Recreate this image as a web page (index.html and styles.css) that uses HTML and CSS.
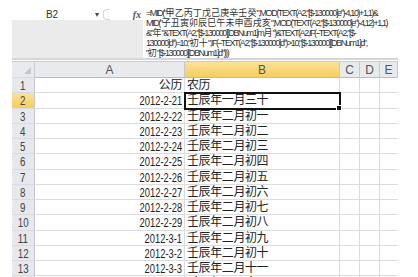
FILE: index.html
```html
<!DOCTYPE html>
<html>
<head>
  <title>农历转换</title>
  <link rel="stylesheet" href="styles.css">
</head>
<body>
  <div class="sheet">
    <div class="formula-bar">
      <div class="fb-left">
        <div class="name-row">
          <div class="name-box">B2</div>
          <span class="arrow">▾</span>
          <span class="grip"></span>
          <span class="fx">fx</span>
        </div>
      </div>
      <div class="formula">
        <div class="fl">=MID("<span class="zh">甲乙丙丁戊己庚辛壬癸</span>",MOD(TEXT(A2,"[$-130000]e")-4,10)+1,1)&amp;</div>
        <div class="fl">MID("<span class="zh">子丑寅卯辰巳午未申酉戌亥</span>",MOD(TEXT(A2,"[$-130000]e")-4,12)+1,1)</div>
        <div class="fl">&amp;"<span class="zh">年</span>"&amp;TEXT(A2,"[$-130000][DBNum1]m<span class="zh">月</span>")&amp;TEXT(A2,IF(--TEXT(A2,"[$-</div>
        <div class="fl">130000]d")=10,"<span class="zh">初十</span>",IF(--TEXT(A2,"[$-130000]d")&gt;10,"[$-130000][DBNum1]d",</div>
        <div class="fl">"<span class="zh">初</span>"[$-130000][DBNum1]d")))</div>
      </div>
    </div>

    <div class="grid">
      <div class="row head">
        <div class="rh corner"><span class="tri"></span></div>
        <div class="c ca">A</div>
        <div class="c cb sel-col">B</div>
        <div class="c cc">C</div>
        <div class="c cd">D</div>
        <div class="c ce">E</div>
      </div>
      <div class="row">
        <div class="rh"><span class="n">1</span></div>
        <div class="c ca num">公历</div>
        <div class="c cb">农历</div>
        <div class="c cc"></div><div class="c cd"></div><div class="c ce"></div>
      </div>
      <div class="row">
        <div class="rh sel-row"><span class="n">2</span></div>
        <div class="c ca num"><span class="n">2012-2-21</span></div>
        <div class="c cb active">壬辰年一月三十<span class="handle"></span></div>
        <div class="c cc"></div><div class="c cd"></div><div class="c ce"></div>
      </div>
      <div class="row">
        <div class="rh"><span class="n">3</span></div>
        <div class="c ca num"><span class="n">2012-2-22</span></div>
        <div class="c cb">壬辰年二月初一</div>
        <div class="c cc"></div><div class="c cd"></div><div class="c ce"></div>
      </div>
      <div class="row">
        <div class="rh"><span class="n">4</span></div>
        <div class="c ca num"><span class="n">2012-2-23</span></div>
        <div class="c cb">壬辰年二月初二</div>
        <div class="c cc"></div><div class="c cd"></div><div class="c ce"></div>
      </div>
      <div class="row">
        <div class="rh"><span class="n">5</span></div>
        <div class="c ca num"><span class="n">2012-2-24</span></div>
        <div class="c cb">壬辰年二月初三</div>
        <div class="c cc"></div><div class="c cd"></div><div class="c ce"></div>
      </div>
      <div class="row">
        <div class="rh"><span class="n">6</span></div>
        <div class="c ca num"><span class="n">2012-2-25</span></div>
        <div class="c cb">壬辰年二月初四</div>
        <div class="c cc"></div><div class="c cd"></div><div class="c ce"></div>
      </div>
      <div class="row">
        <div class="rh"><span class="n">7</span></div>
        <div class="c ca num"><span class="n">2012-2-26</span></div>
        <div class="c cb">壬辰年二月初五</div>
        <div class="c cc"></div><div class="c cd"></div><div class="c ce"></div>
      </div>
      <div class="row">
        <div class="rh"><span class="n">8</span></div>
        <div class="c ca num"><span class="n">2012-2-27</span></div>
        <div class="c cb">壬辰年二月初六</div>
        <div class="c cc"></div><div class="c cd"></div><div class="c ce"></div>
      </div>
      <div class="row">
        <div class="rh"><span class="n">9</span></div>
        <div class="c ca num"><span class="n">2012-2-28</span></div>
        <div class="c cb">壬辰年二月初七</div>
        <div class="c cc"></div><div class="c cd"></div><div class="c ce"></div>
      </div>
      <div class="row">
        <div class="rh"><span class="n">10</span></div>
        <div class="c ca num"><span class="n">2012-2-29</span></div>
        <div class="c cb">壬辰年二月初八</div>
        <div class="c cc"></div><div class="c cd"></div><div class="c ce"></div>
      </div>
      <div class="row">
        <div class="rh"><span class="n">11</span></div>
        <div class="c ca num"><span class="n">2012-3-1</span></div>
        <div class="c cb">壬辰年二月初九</div>
        <div class="c cc"></div><div class="c cd"></div><div class="c ce"></div>
      </div>
      <div class="row">
        <div class="rh"><span class="n">12</span></div>
        <div class="c ca num"><span class="n">2012-3-2</span></div>
        <div class="c cb">壬辰年二月初十</div>
        <div class="c cc"></div><div class="c cd"></div><div class="c ce"></div>
      </div>
      <div class="row">
        <div class="rh"><span class="n">13</span></div>
        <div class="c ca num"><span class="n">2012-3-3</span></div>
        <div class="c cb">壬辰年二月十一</div>
        <div class="c cc"></div><div class="c cd"></div><div class="c ce"></div>
      </div>
      <div class="row">
        <div class="rh"><span class="n">14</span></div>
        <div class="c ca num"><span class="n">2012-3-4</span></div>
        <div class="c cb">壬辰年二月十二</div>
        <div class="c cc"></div><div class="c cd"></div><div class="c ce"></div>
      </div>
    </div>
  </div>
</body>
</html>
```

FILE: styles.css
```css
html, body {
  height: 277px;
  overflow: hidden;
}

body {
  margin: 0;
  padding: 0;
  background: #fff;
  font-family: "Liberation Sans", "Noto Sans CJK SC", sans-serif;
}

.sheet {
  width: 386px;
  height: 269px;
  overflow: hidden;
  margin: 8px 0 0 12px;
}

/* formula bar */
.formula-bar {
  display: flex;
  height: 50px;
  border-bottom: 2px solid #d4d6d9;
}

.fb-left {
  width: 131px;
  background: #ebebeb;
}

.name-row {
  display: flex;
  align-items: center;
  height: 12px;
  background: #fff;
}

.name-box {
  width: 80px;
  text-align: center;
  font-size: 10px;
  color: #333;
}

.arrow {
  font-size: 8px;
  color: #444;
  margin-left: 3px;
}

.grip {
  width: 6px;
  height: 9px;
  margin-left: 4px;
  border: 1px solid #d8d8d8;
  border-right: none;
  border-radius: 4px 0 0 4px;
}

.fx {
  margin-left: auto;
  margin-right: 2px;
  font-family: "Liberation Serif", serif;
  font-style: italic;
  font-weight: bold;
  font-size: 10px;
  color: #555;
}

.formula {
  flex: 1;
  padding: 0 0 0 3px;
  font-size: 9px;
  line-height: 10px;
  letter-spacing: -1.4px;
  color: #333;
  overflow: hidden;
}

.fl {
  white-space: nowrap;
}

.zh {
  letter-spacing: 0.1px;
}

/* grid */
.grid {
  margin-top: 1px;
}

.row {
  display: flex;
  height: 15.25px;
  font-size: 12px;
  line-height: 15px;
  color: #222;
}

.row.head {
  height: 16px;
  line-height: 16px;
  background: #e8eaee;
  border-top: 1px solid #c9ccd1;
  color: #555;
  font-size: 12px;
}

.rh {
  width: 23px;
  flex: none;
  box-sizing: border-box;
  background: #e6e8ec;
  border-right: 1px solid #c5c9ce;
  border-bottom: 1px solid #d8dbe0;
  text-align: center;
  color: #444;
  font-size: 13px;
}

.rh .n {
  display: inline-block;
  transform: scaleX(0.75);
}

.corner {
  position: relative;
  background: #e8eaee;
}

.tri {
  position: absolute;
  right: 3px;
  bottom: 3px;
  border-left: 7px solid transparent;
  border-bottom: 7px solid #c3c7cc;
}

.c {
  flex: none;
  box-sizing: border-box;
  border-right: 1px solid #dadcdf;
  border-bottom: 1px solid #dadcdf;
  white-space: nowrap;
  overflow: visible;
  letter-spacing: -0.4px;
}

.head .c {
  text-align: center;
  letter-spacing: 0;
  border-right: 1px solid #c5c9ce;
  border-bottom: 1px solid #b9bdc3;
}

.ca { width: 150px; }
.cb { width: 155px; padding-left: 2px; }
.cc { width: 20px; }
.cd { width: 20px; }
.ce { width: 18px; border-right: none; }

.head .cb { padding-left: 0; }

.num {
  text-align: right;
  padding-right: 2px;
}

.num .n {
  display: inline-block;
  font-size: 13px;
  letter-spacing: 0;
  transform: scaleX(0.72);
  transform-origin: right center;
}

.sel-col {
  background: linear-gradient(#fbe29a, #f6cd5e);
  color: #555;
}

.sel-row {
  background: linear-gradient(#fbe29a, #f6cd5e);
}

.active {
  position: relative;
  outline: 2px solid #111;
  outline-offset: -1px;
}

.handle {
  position: absolute;
  right: -3px;
  bottom: -3px;
  width: 4px;
  height: 4px;
  background: #111;
  border: 1px solid #fff;
}
```
